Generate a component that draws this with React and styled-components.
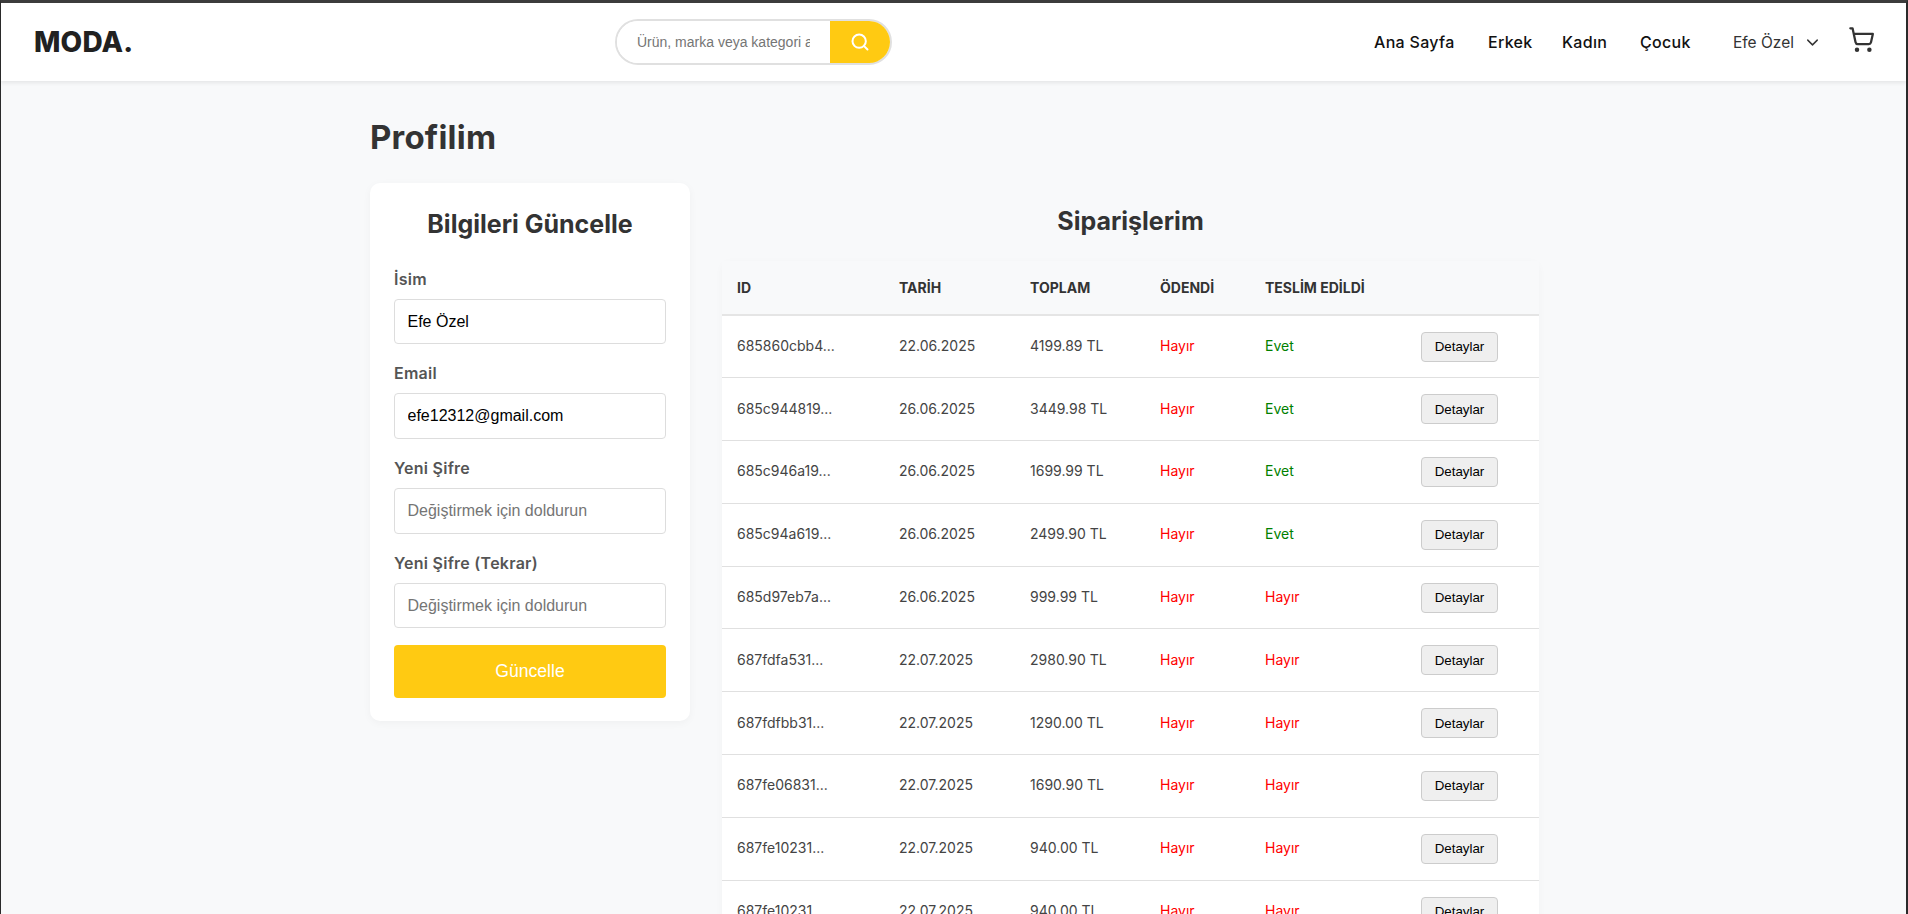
import styled, { createGlobalStyle } from 'styled-components'
import { Search, ChevronDown, ShoppingCart } from 'lucide-react'

const GlobalStyle = createGlobalStyle`
  html, body {
    margin: 0;
    padding: 0;
    height: 914px;
    overflow: hidden;
    background: #f8f9fa;
  }
  * { box-sizing: border-box; }
`

const orders = [
  ['685860cbb4...', '22.06.2025', '4199.89 TL', false, true],
  ['685c944819...', '26.06.2025', '3449.98 TL', false, true],
  ['685c946a19...', '26.06.2025', '1699.99 TL', false, true],
  ['685c94a619...', '26.06.2025', '2499.90 TL', false, true],
  ['685d97eb7a...', '26.06.2025', '999.99 TL', false, false],
  ['687fdfa531...', '22.07.2025', '2980.90 TL', false, false],
  ['687fdfbb31...', '22.07.2025', '1290.00 TL', false, false],
  ['687fe06831...', '22.07.2025', '1690.90 TL', false, false],
  ['687fe10231...', '22.07.2025', '940.00 TL', false, false],
  ['687fe10231...', '22.07.2025', '940.00 TL', false, false],
]

const fields = [
  { label: 'İsim', value: 'Efe Özel', height: 45 },
  { label: 'Email', value: 'efe12312@gmail.com', height: 46 },
  { label: 'Yeni Şifre', placeholder: 'Değiştirmek için doldurun', height: 46 },
  { label: 'Yeni Şifre (Tekrar)', placeholder: 'Değiştirmek için doldurun', height: 45 },
]

function App() {
  return (
    <Frame>
      <GlobalStyle />
      <Header>
        <Logo>MODA.</Logo>
        <SearchBox>
          <SearchInput placeholder="Ürün, marka veya kategori ara..." readOnly />
          <SearchButton><Search size={20} strokeWidth={2.4} /></SearchButton>
        </SearchBox>
        <Nav>
          <NavLink $width={82}>Ana Sayfa</NavLink>
          <NavLink $width={42}>Erkek</NavLink>
          <NavLink $width={46}>Kadın</NavLink>
          <NavLink $width={51}>Çocuk</NavLink>
        </Nav>
        <UserMenu>
          Efe Özel
          <ChevronDown size={19} strokeWidth={1.8} />
        </UserMenu>
        <CartIcon><ShoppingCart size={27} strokeWidth={2} /></CartIcon>
      </Header>
      <Main>
        <PageTitle>Profilim</PageTitle>
        <Columns>
          <FormCard>
            <CardTitle>Bilgileri Güncelle</CardTitle>
            {fields.map((f) => (
              <Field key={f.label}>
                <Label>{f.label}</Label>
                <TextInput
                  $height={f.height}
                  defaultValue={f.value}
                  placeholder={f.placeholder}
                  readOnly
                />
              </Field>
            ))}
            <SubmitButton>Güncelle</SubmitButton>
          </FormCard>
          <OrdersColumn>
            <OrdersTitle>Siparişlerim</OrdersTitle>
            <OrdersTable>
              <colgroup>
                <col width="162" />
                <col width="131" />
                <col width="130" />
                <col width="105" />
                <col width="156" />
                <col />
              </colgroup>
              <thead>
                <tr>
                  <Th>ID</Th>
                  <Th>TARİH</Th>
                  <Th>TOPLAM</Th>
                  <Th>ÖDENDİ</Th>
                  <Th>TESLİM EDİLDİ</Th>
                  <Th />
                </tr>
              </thead>
              <tbody>
                {orders.map((o, i) => (
                  <tr key={i}>
                    <Td>{o[0]}</Td>
                    <Td>{o[1]}</Td>
                    <Td>{o[2]}</Td>
                    <Td><Status $ok={o[3]}>{o[3] ? 'Evet' : 'Hayır'}</Status></Td>
                    <Td><Status $ok={o[4]}>{o[4] ? 'Evet' : 'Hayır'}</Status></Td>
                    <Td><DetailButton>Detaylar</DetailButton></Td>
                  </tr>
                ))}
              </tbody>
            </OrdersTable>
          </OrdersColumn>
        </Columns>
      </Main>
    </Frame>
  )
}

export default App

const Frame = styled.div`
  height: 914px;
  overflow: hidden;
  border-top: 3px solid #3c3c3c;
  border-left: 1px solid #2a2a2a;
  border-right: 2px solid #2a2a2a;
  background: #f8f9fa;
  font-family: Inter, "Open Sans", sans-serif;
`

const Header = styled.header`
  height: 78px;
  background: #fff;
  box-shadow: 0 2px 4px rgba(0, 0, 0, 0.08);
  display: flex;
  align-items: center;
  padding-left: 33px;
  position: relative;
  & > * { flex-shrink: 0; }
`

const Logo = styled.div`
  width: 581px;
  font-size: 28px;
  font-weight: 800;
  color: #212121;
  letter-spacing: 0.2px;
`

const SearchBox = styled.div`
  width: 277px;
  height: 46px;
  display: flex;
  border: 2px solid #e0e0e0;
  border-radius: 23px;
  overflow: hidden;
  background: #fff;
`

const SearchInput = styled.input`
  flex: 1;
  min-width: 0;
  border: 0;
  outline: 0;
  padding: 0 20px 0 20px;
  font-family: "Liberation Sans", Arial, sans-serif;
  font-size: 14px;
  &::placeholder { color: #757575; }
`

const SearchButton = styled.div`
  width: 60px;
  background: #ffca12;
  color: #fff;
  display: flex;
  align-items: center;
  justify-content: center;
`

const Nav = styled.nav`
  margin-left: 482px;
  display: flex;
  gap: 32px;
`

const NavLink = styled.a`
  width: ${(p) => p.$width}px;
  white-space: nowrap;
  font-size: 16px;
  font-weight: 500;
  letter-spacing: 0.3px;
  color: #111;
`

const UserMenu = styled.div`
  margin-left: 42px;
  display: flex;
  align-items: center;
  gap: 9px;
  font-size: 15.5px;
  white-space: nowrap;
  color: #333;
`

const CartIcon = styled.div`
  margin-left: 26px;
  margin-top: -5px;
  display: flex;
  color: #333;
`

const Main = styled.main`
  padding: 36px 0 0 369px;
`

const PageTitle = styled.h1`
  margin: 0 0 26px;
  font-size: 33px;
  line-height: 40px;
  font-weight: 700;
  letter-spacing: 0.2px;
  color: #333;
`

const Columns = styled.div`
  display: flex;
  align-items: flex-start;
  gap: 32px;
`

const FormCard = styled.section`
  width: 320px;
  height: 538px;
  flex-shrink: 0;
  background: #fff;
  border-radius: 10px;
  padding: 25px 24px 24px;
  box-shadow: 0 2px 8px rgba(0, 0, 0, 0.04);
`

const CardTitle = styled.h2`
  margin: 0 0 27px;
  text-align: center;
  font-size: 25px;
  line-height: 32px;
  font-weight: 700;
  color: #333;
`

const Field = styled.div`
  margin-bottom: 17px;
`

const Label = styled.label`
  display: block;
  margin-bottom: 8px;
  font-size: 16px;
  line-height: 24px;
  font-weight: 600;
  letter-spacing: 0.25px;
  color: #555;
`

const TextInput = styled.input`
  display: block;
  width: 100%;
  height: ${(p) => p.$height}px;
  border: 1px solid #ddd;
  border-radius: 4px;
  padding: 0 12.5px;
  outline: 0;
  font-family: "Liberation Sans", Arial, sans-serif;
  font-size: 16px;
  color: #000;
  &::placeholder { color: #757575; }
`

const SubmitButton = styled.button`
  display: block;
  width: 100%;
  height: 53px;
  margin-top: 14px;
  border: 0;
  border-radius: 4px;
  background: #ffca12;
  color: #fff;
  font-family: "Liberation Sans", Arial, sans-serif;
  font-size: 17.6px;
`

const OrdersColumn = styled.section`
  width: 817px;
  margin-top: 22px;
`

const OrdersTitle = styled.h2`
  margin: 0 0 24px;
  text-align: center;
  font-size: 25px;
  line-height: 32px;
  font-weight: 700;
  color: #333;
`

const OrdersTable = styled.table`
  width: 100%;
  table-layout: fixed;
  border-collapse: collapse;
  background: #fff;
  border-radius: 8px;
  box-shadow: 0 2px 8px rgba(0, 0, 0, 0.03);
`

const Th = styled.th`
  height: 54px;
  padding: 0 15px;
  background: #f8f9fa;
  border-bottom: 2px solid #e5e5e5;
  text-align: left;
  font-size: 14px;
  font-weight: 700;
  color: #333;
`

const Td = styled.td`
  height: 62.8px;
  padding: 0 15px 2px;
  border-bottom: 1px solid #e0e0e0;
  font-size: 14px;
  color: #444;
  white-space: nowrap;
`

const Status = styled.span`
  color: ${(p) => (p.$ok ? 'green' : 'red')};
`

const DetailButton = styled.button`
  width: 77px;
  height: 30px;
  margin-top: 2px;
  padding: 0;
  border: 1px solid #ccc;
  border-radius: 4px;
  background: #efefef;
  color: #000;
  font-family: "Liberation Sans", Arial, sans-serif;
  font-size: 13.33px;
`
